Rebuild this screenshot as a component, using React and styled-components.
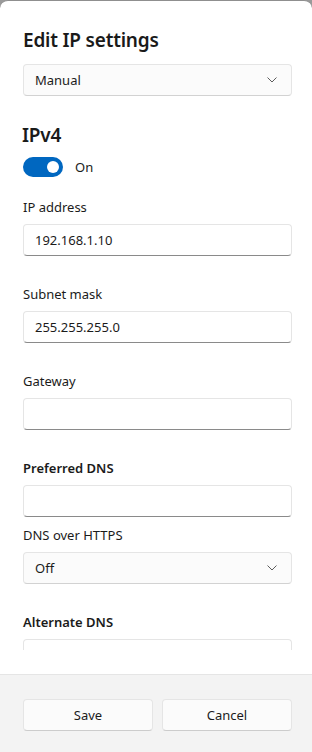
import React from "react";
import styled, { createGlobalStyle } from "styled-components";

const Global = createGlobalStyle`
  html, body { margin: 0; padding: 0; background: #9a9a9a; }
  body { font-family: "Segoe UI", "Noto Sans", sans-serif; color: #1b1b1b; }
  * { box-sizing: border-box; }
`;

const Dialog = styled.div`
  width: 312px;
  height: 752px;
  display: flex;
  flex-direction: column;
  background: #ffffff;
  border-top: 1px solid #8f8f8f;
  border-radius: 8px 8px 0 0;
  overflow: hidden;
`;

const Body = styled.div`
  height: 649px;
  overflow: hidden;
  padding: 25px 20px 0 23px;
  display: flex;
  flex-direction: column;
`;

const Spacer = styled.div`
  height: 24px;
  flex: none;
`;

const Title = styled.h1`
  margin: 0;
  font-size: 19px;
  letter-spacing: -0.2px;
  line-height: 28px;
  font-weight: 600;
  color: #1a1a1a;
`;

const Section = styled.h2`
  margin: 25px 0 0 -1px;
  font-size: 19px;
  letter-spacing: -0.2px;
  line-height: 28px;
  font-weight: 600;
  color: #1a1a1a;
`;

const Select = styled.div`
  margin-top: ${(p) => p.$mt || 0}px;
  height: 32px;
  flex: none;
  display: flex;
  align-items: center;
  justify-content: space-between;
  padding: 0 14px 0 11px;
  background: #fbfbfb;
  border: 1px solid #e5e5e5;
  border-bottom-color: #d2d2d2;
  border-radius: 4px;
  font-size: 13px;
  color: #1b1b1b;
`;

const Chevron = () => (
  <svg width="10" height="6" viewBox="0 0 10 6" fill="none">
    <path d="M0.8 0.8 L5 5 L9.2 0.8" stroke="#5c5c5c" strokeWidth="1" strokeLinecap="round" strokeLinejoin="round" />
  </svg>
);

const ToggleRow = styled.div`
  margin-top: 8px;
  display: flex;
  align-items: center;
  gap: 12px;
  font-size: 13px;
  line-height: 20px;
`;

const Track = styled.div`
  width: 40px;
  height: 20px;
  border-radius: 10px;
  background: #0067c0;
  display: flex;
  align-items: center;
  justify-content: flex-end;
  padding-right: 4px;
`;

const Knob = styled.div`
  width: 12px;
  height: 12px;
  border-radius: 50%;
  background: #ffffff;
`;

const Label = styled.div`
  margin-top: ${(p) => p.$mt}px;
  font-size: 13px;
  line-height: 20px;
  font-weight: ${(p) => (p.$bold ? 600 : 400)};
  color: #1b1b1b;
`;

const Input = styled.div`
  margin-top: 7px;
  height: 32px;
  flex: none;
  display: flex;
  align-items: center;
  padding: 0 11px;
  background: #ffffff;
  border: 1px solid #e5e5e5;
  border-bottom-color: #8a8a8a;
  border-radius: 4px;
  font-size: 13px;
  color: #1b1b1b;
`;

const Footer = styled.div`
  flex: 1;
  background: #f3f3f3;
  border-top: 1px solid #e5e5e5;
  padding: 24px 20px 0 23px;
  display: grid;
  grid-template-columns: 1fr 1fr;
  column-gap: 9px;
  align-content: start;
`;

const Button = styled.button`
  height: 32px;
  background: #fbfbfb;
  border: 1px solid #e5e5e5;
  border-bottom-color: #cccccc;
  border-radius: 4px;
  font-family: inherit;
  font-size: 13px;
  color: #1b1b1b;
  padding: 0;
`;

const fields = [
  { label: "IP address", value: "192.168.1.10", mt: 20 },
  { label: "Subnet mask", value: "255.255.255.0", mt: 28 },
  { label: "Gateway", value: "", mt: 28 },
  { label: "Preferred DNS", value: "", mt: 28, bold: true },
];

export default function App() {
  return (
    <>
      <Global />
      <Dialog>
        <Body>
          <Title>Edit IP settings</Title>
          <Select $mt={10}>
            <span>Manual</span>
            <Chevron />
          </Select>
          <Section>IPv4</Section>
          <ToggleRow>
            <Track>
              <Knob />
            </Track>
            <span>On</span>
          </ToggleRow>
          {fields.map((f) => (
            <React.Fragment key={f.label}>
              <Label $mt={f.mt} $bold={f.bold}>{f.label}</Label>
              <Input>{f.value}</Input>
            </React.Fragment>
          ))}
          <Label $mt={8}>DNS over HTTPS</Label>
          <Select $mt={7}>
            <span>Off</span>
            <Chevron />
          </Select>
          <Label $mt={28} $bold>Alternate DNS</Label>
          <Input />
        </Body>
        <Spacer />
        <Footer>
          <Button>Save</Button>
          <Button>Cancel</Button>
        </Footer>
      </Dialog>
    </>
  );
}
